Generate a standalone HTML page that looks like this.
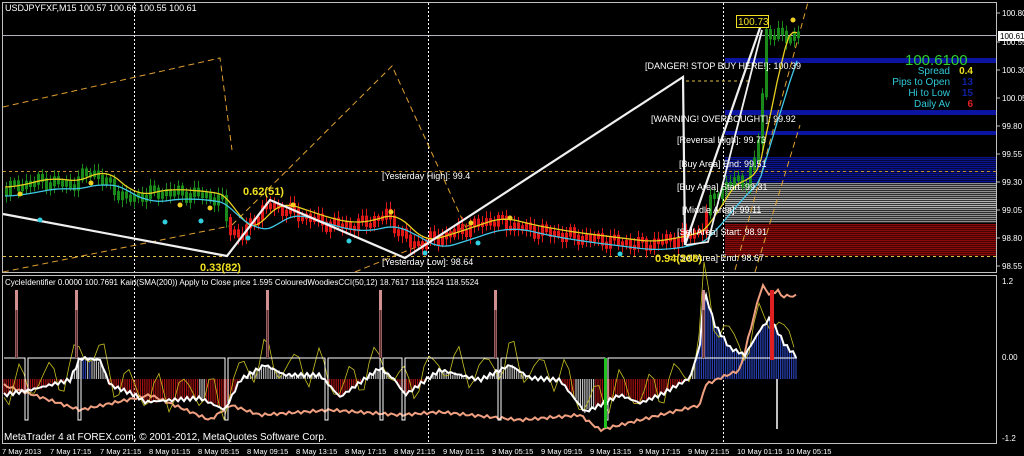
<!DOCTYPE html>
<html><head><meta charset="utf-8"><style>
html,body{margin:0;padding:0;background:#000;width:1024px;height:456px;overflow:hidden}
svg{display:block}
text{font-family:"Liberation Sans",sans-serif}
</style></head><body>
<svg id="s" width="1024" height="456" xmlns="http://www.w3.org/2000/svg">
<rect width="1024" height="456" fill="#000"/>
<g id="zones"></g>
<rect x="2.5" y="2.5" width="994" height="270" fill="none" stroke="#c0c0c0" stroke-width="1"/>
<rect x="2.5" y="275.5" width="994" height="168" fill="none" stroke="#c0c0c0" stroke-width="1"/>
<line x1="3" y1="35.5" x2="996" y2="35.5" stroke="#b0b0c0"/>
<g stroke="#fff" stroke-dasharray="2,2" stroke-width="1">
<line x1="134.5" y1="3" x2="134.5" y2="272"/><line x1="134.5" y1="276" x2="134.5" y2="443"/>
<line x1="428.5" y1="3" x2="428.5" y2="272"/><line x1="428.5" y1="276" x2="428.5" y2="443"/>
<line x1="723.5" y1="3" x2="723.5" y2="272"/><line x1="723.5" y1="276" x2="723.5" y2="443"/>
</g>
<g fill="none" stroke="#e0a030" stroke-width="1" stroke-dasharray="6,4">
<polyline points="3,107 220,58 232,150"/>
<polyline points="3,272 230,226"/>
<polyline points="232,225 392,66 468,232"/>
<polyline points="355,272 470,225"/>
<polyline points="735,270 808,2"/>
<polyline points="755,272 800,125"/>
</g>
<g fill="none" stroke="#e0c040" stroke-width="1" stroke-dasharray="3,3">
<line x1="3" y1="171.5" x2="996" y2="171.5" stroke="#c09030"/>
<line x1="3" y1="256.5" x2="996" y2="256.5"/>
<line x1="686" y1="81" x2="752" y2="81"/>
</g>
<g id="candles"></g>
<polyline id="ma1" fill="none" stroke="#e8d020" stroke-width="1.3"/>
<polyline id="ma2" fill="none" stroke="#40c8e8" stroke-width="1.3"/>
<polyline fill="none" stroke="#f0f0f0" stroke-width="2.2" points="3,214 227,256 270,200 405,258 683,77 685,245 762,22"/>
<polyline fill="none" stroke="#f0f0f0" stroke-width="1.8" points="686,245 708,242 762,30"/>
<g id="dots"></g>
<g font-size="9" fill="#fff">
<text x="5" y="11">USDJPYFXF,M15  100.57 100.66 100.55 100.61</text>
<text x="382" y="179">[Yesterday High]: 99.4</text>
<text x="382" y="265">[Yesterday Low]: 98.64</text>
<text x="645" y="69">[DANGER! STOP BUY HERE!]: 100.39</text>
<text x="651" y="122">[WARNING! OVERBOUGHT]: 99.92</text>
<text x="677" y="143">[Reversal High]: 99.73</text>
<text x="679" y="167">[Buy Area] End: 99.51</text>
<text x="677" y="190">[Buy Area] Start: 99.31</text>
<text x="682" y="213">[Middle Area]: 99.11</text>
<text x="677" y="235">[Sell Area] Start: 98.91</text>
<text x="677" y="261">[Sell Area] End: 98.67</text>
</g>
<g font-size="11" font-weight="bold" fill="#f0e020">
<text x="243" y="195">0.62(51)</text>
<text x="200" y="271">0.33(82)</text>
<text x="655" y="262">0.94(208)</text>
</g>
<rect x="736.5" y="15.5" width="32" height="12" fill="#000" stroke="#f0e020"/>
<text x="738" y="25" font-size="10" fill="#f0e020">100.73</text>
<text x="905" y="65" font-size="15" fill="#30d030">100.6100</text>
<g font-size="10" fill="#30c8d8" text-anchor="end">
<text x="950" y="74">Spread</text><text x="950" y="85">Pips to Open</text><text x="950" y="96">Hi to Low</text><text x="950" y="107">Daily Av</text>
</g>
<g font-size="10" font-weight="bold" text-anchor="end">
<text x="973" y="74" fill="#f0e020">0.4</text><text x="973" y="85" fill="#1020a0">13</text><text x="973" y="96" fill="#1020a0">15</text><text x="973" y="107" fill="#e02020">6</text>
</g>
<g font-size="8" fill="#fff">
<text x="1002" y="16">100.80</text><text x="1002" y="45">100.55</text><text x="1002" y="73">100.30</text><text x="1002" y="101">100.05</text>
<text x="1002" y="129">99.80</text><text x="1002" y="157">99.55</text><text x="1002" y="185">99.30</text><text x="1002" y="213">99.05</text>
<text x="1002" y="241">98.80</text><text x="1002" y="269">98.55</text>
<text x="1002" y="284">1.2</text><text x="1002" y="360">0.00</text><text x="1002" y="441">-1.2</text>
</g>
<rect x="998" y="31" width="26" height="10" fill="#fff"/>
<text x="1000" y="39" font-size="8" fill="#000">100.61</text>
<g stroke="#c0c0c0"><line x1="997" y1="13" x2="1000" y2="13"/><line x1="997" y1="42" x2="1000" y2="42"/><line x1="997" y1="70" x2="1000" y2="70"/><line x1="997" y1="98" x2="1000" y2="98"/><line x1="997" y1="126" x2="1000" y2="126"/><line x1="997" y1="154" x2="1000" y2="154"/><line x1="997" y1="182" x2="1000" y2="182"/><line x1="997" y1="210" x2="1000" y2="210"/><line x1="997" y1="238" x2="1000" y2="238"/><line x1="997" y1="266" x2="1000" y2="266"/></g>
<g id="ind"></g>
<text x="5" y="285" font-size="8" fill="#fff">CycleIdentifier 0.0000 100.7691  Kairi(SMA(200)) Apply to Close price 1.595  ColouredWoodiesCCI(50,12) 18.7617 118.5524 118.5524</text>
<text x="4" y="440" font-size="10" fill="#fff">MetaTrader 4 at FOREX.com, © 2001-2012, MetaQuotes Software Corp.</text>
<g font-size="7.5" fill="#fff">
<text x="2" y="454">7 May 2013</text><text x="50" y="454">7 May 17:15</text><text x="100" y="454">7 May 21:15</text><text x="149" y="454">8 May 01:15</text><text x="198" y="454">8 May 05:15</text><text x="247" y="454">8 May 09:15</text><text x="296" y="454">8 May 13:15</text><text x="345" y="454">8 May 17:15</text><text x="394" y="454">8 May 21:15</text><text x="443" y="454">9 May 01:15</text><text x="492" y="454">9 May 05:15</text><text x="541" y="454">9 May 09:15</text><text x="590" y="454">9 May 13:15</text><text x="639" y="454">9 May 17:15</text><text x="688" y="454">9 May 21:15</text><text x="737" y="454">10 May 01:15</text><text x="786" y="454">10 May 05:15</text>
</g>
</svg>
<script>
var NS="http://www.w3.org/2000/svg";
function el(p,t,a){var e=document.createElementNS(NS,t);for(var k in a)e.setAttribute(k,a[k]);document.getElementById(p).appendChild(e);return e;}
el('zones','rect',{x:725,y:58,width:271,height:5,fill:'#0a14a0'});
el('zones','rect',{x:725,y:110,width:271,height:5,fill:'#0a14a0'});
el('zones','rect',{x:725,y:131,width:271,height:4,fill:'#0a14a0'});
for(var y=157;y<183;y+=2)el('zones','rect',{x:725,y:y,width:271,height:1.4,fill:'#0a1490'});
for(var y=183;y<223;y+=2)el('zones','rect',{x:725,y:y,width:271,height:1.3,fill:(y>198&&y<208)?'#b0b0b0':'#909090'});
for(var y=224;y<256;y+=2)el('zones','rect',{x:725,y:y,width:271,height:1.5,fill:'#8a0a0a'});
var K=[[5,190],[15,186],[40,181],[70,185],[80,178],[90,170],[100,180],[110,186],[125,200],[140,195],[160,192],[200,195],[220,200],[228,228],[240,238],[255,215],[270,205],[290,212],[320,222],[340,226],[360,224],[385,215],[395,228],[410,245],[430,240],[460,230],[490,220],[520,228],[560,235],[600,240],[640,245],[680,238],[700,230],[712,195],[730,182],[745,180],[755,160],[760,110],[765,32],[775,36],[797,36]];
function P(x){for(var i=1;i<K.length;i++)if(x<=K[i][0]){var a=K[i-1],b=K[i];return a[1]+(b[1]-a[1])*(x-a[0])/(b[0]-a[0]);}return 36;}
var prev=P(5);
for(var x=5;x<=797;x+=4){
 var c=P(x)+Math.sin(x*0.45)*4+Math.sin(x*1.3)*3;
 var hi=Math.min(c,prev)-4-Math.abs(Math.sin(x*1.7))*5, lo=Math.max(c,prev)+4+Math.abs(Math.cos(x*1.3))*5;
 var col=(x<228)?'#1a8a1a':(x<706?'#e01818':'#1a8a1a');
 el('candles','rect',{x:x+1,y:hi,width:1,height:lo-hi,fill:col});
 el('candles','rect',{x:x,y:Math.min(c,prev)-2,width:3,height:Math.max(5,Math.abs(c-prev)+4),fill:col});
 prev=c;
}
var m1=[],m2=[];
for(var x=5;x<=797;x+=4){var s=0,n=0;for(var j=0;j<30;j+=3){s+=P(Math.max(5,x-j));n++;}m1.push(x+','+(s/n-3));var t=0;for(var j=0;j<45;j+=3){t+=P(Math.max(5,x-j));}m2.push(x+','+(t/15+6));}
document.getElementById('ma1').setAttribute('points',m1.join(' '));
document.getElementById('ma2').setAttribute('points',m2.join(' '));
[[20,194,'#f0d020'],[91,183,'#f0d020'],[180,205,'#f0d020'],[210,208,'#f0d020'],[293,205,'#f0d020'],[391,212,'#f0d020'],[510,218,'#f0d020'],[793,20,'#f0d020'],[471,223,'#f0d020'],[40,220,'#30d0e0'],[165,222,'#30d0e0'],[201,221,'#30d0e0'],[248,238,'#30d0e0'],[349,241,'#30d0e0'],[425,253,'#30d0e0'],[478,243,'#30d0e0'],[620,254,'#30d0e0']].forEach(function(d){el('dots','circle',{cx:d[0],cy:d[1],r:2.5,fill:d[2]});});
var base=379,zero=358;
function W(x){
 var v=[[3,395],[30,390],[70,380],[80,358],[100,360],[110,385],[135,395],[145,402],[200,398],[225,410],[240,380],[265,365],[285,375],[320,375],[340,397],[380,368],[395,380],[405,395],[440,370],[480,380],[510,365],[530,378],[560,380],[585,412],[600,405],[620,395],[640,403],[660,395],[690,378],[700,345],[704,290],[715,325],[730,348],[745,355],[760,330],[770,318],[785,345],[797,357]];
 for(var i=1;i<v.length;i++)if(x<=v[i][0]){var a=v[i-1],b=v[i];return a[1]+(b[1]-a[1])*(x-a[0])/(b[0]-a[0]);}return 357;}
for(var x=4;x<=797;x+=2.2){
 var w=W(x)+Math.sin(x*1.1)*2;
 var col=(w<base)?(w<zero?'#2840b0':'#b0b0b0'):'#a01010';
 if(x>575&&x<595||x>198&&x<206)col='#c0c0c0';
 el('ind','line',{x1:x,y1:base,x2:x,y2:w,stroke:col,'stroke-width':1.2});
}
var wl=[],ol=[],yl=[];
for(var x=4;x<=797;x+=3){wl.push(x+','+(W(x)+Math.sin(x*1.1)*2));
 var o=[[3,385],[80,410],[150,395],[210,420],[230,405],[260,415],[330,410],[400,415],[440,412],[520,420],[580,415],[600,430],[700,405],[705,385],[720,378],[740,370],[755,312],[762,285],[770,295],[778,290],[797,296]];
 var ov=396;for(var i=1;i<o.length;i++)if(x<=o[i][0]){var a=o[i-1],b=o[i];ov=a[1]+(b[1]-a[1])*(x-a[0])/(b[0]-a[0]);break;}
 if(x>780)ov=296;
 ol.push(x+','+(ov+Math.sin(x*1.3)*1.5));
}
for(var x=4;x<=797;x+=5){yl.push(x+','+(W(x)-8+Math.sin(x*0.23)*16+Math.sin(x*0.9)*5));}
el('ind','polyline',{points:ol.join(' '),fill:'none',stroke:'#f0a080','stroke-width':2});
el('ind','polyline',{points:yl.join(' '),fill:'none',stroke:'#c8c020','stroke-width':0.8});
el('ind','polyline',{points:wl.join(' '),fill:'none',stroke:'#fff','stroke-width':2});
var st='4,'+zero;[[25,28],[78,81],[225,228],[325,328],[380,383],[402,405],[498,501],[605,608]].forEach(function(r){st+=' '+r[0]+','+zero+' '+r[0]+',420 '+r[1]+',420 '+r[1]+','+zero;});st+=' 797,'+zero;
el('ind','polyline',{points:st,fill:'none',stroke:'#fff','stroke-width':1});
[16,76,267,380,495,703].forEach(function(x){el('ind','rect',{x:x-1,y:290,width:3,height:68,fill:'#d09090'});el('ind','rect',{x:x-0.5,y:310,width:2,height:48,fill:'#603030'});});
el('ind','rect',{x:770,y:290,width:4,height:70,fill:'#e02020'});
el('ind','rect',{x:776,y:379,width:2,height:50,fill:'#c0c0c0'});
el('ind','rect',{x:604,y:358,width:3,height:70,fill:'#20c020'});
</script>
</body></html>
